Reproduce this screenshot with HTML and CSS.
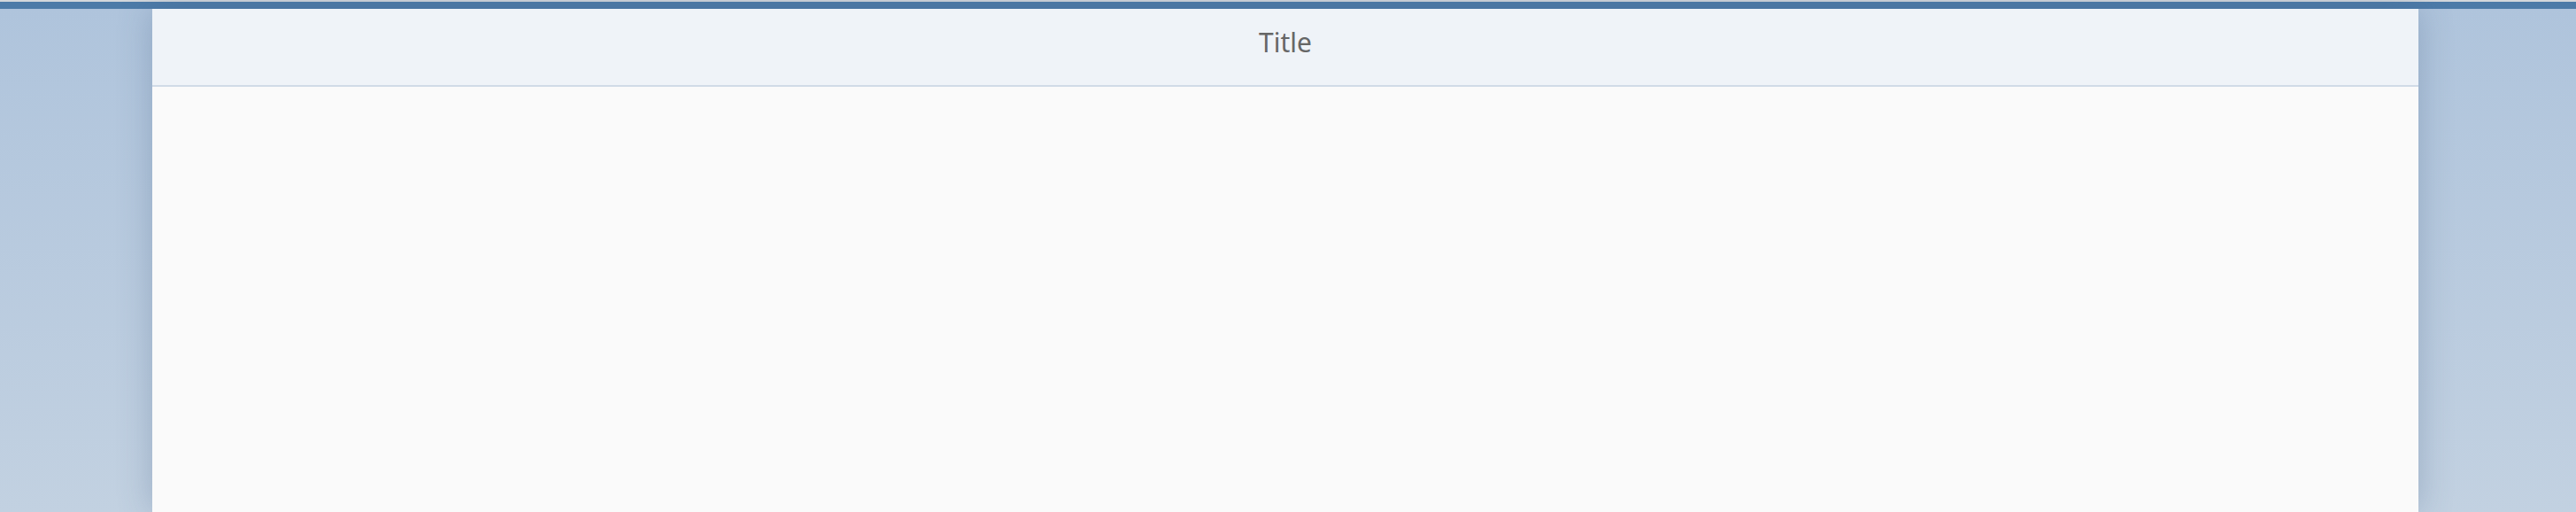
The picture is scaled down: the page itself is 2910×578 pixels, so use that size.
FILE: index.html
```html
<!DOCTYPE html>
<html>
<head>
<meta charset="utf-8">
<link rel="stylesheet" href="styles.css">
</head>
<body>
<div class="topline"></div>
<div class="shellbar"></div>
<div class="stage">
  <div class="page">
    <header class="page-header"><span class="title">Title</span></header>
    <main class="page-content"></main>
  </div>
</div>
</body>
</html>
```
FILE: styles.css
```css
html, body {
  margin: 0;
  padding: 0;
  height: 100%;
}
body {
  display: flex;
  flex-direction: column;
  font-family: "Noto Sans", "Liberation Sans", sans-serif;
  background: #c2d1e2;
  overflow: hidden;
}
.topline {
  height: 2px;
  background: #d4d8dc;
  flex: none;
}
.shellbar {
  height: 8px;
  background: #4d7ba8;
  flex: none;
}
.stage {
  flex: 1;
  display: flex;
  justify-content: center;
  background: linear-gradient(to bottom, #afc4dc 0%, #c2d1e1 100%);
}
.page {
  width: 2560px;
  margin-left: -6px;
  display: flex;
  flex-direction: column;
  box-shadow: 0 0 36px rgba(60, 90, 130, 0.3);
}
.page-header {
  height: 88px;
  flex: none;
  box-sizing: border-box;
  padding-bottom: 10px;
  background: #eff3f8;
  border-bottom: 2px solid #d1dbe7;
  display: flex;
  align-items: center;
  justify-content: center;
}
.title {
  font-size: 30px;
  line-height: 40px;
  color: #666666;
}
.page-content {
  flex: 1;
  background: #fafafa;
}
```
